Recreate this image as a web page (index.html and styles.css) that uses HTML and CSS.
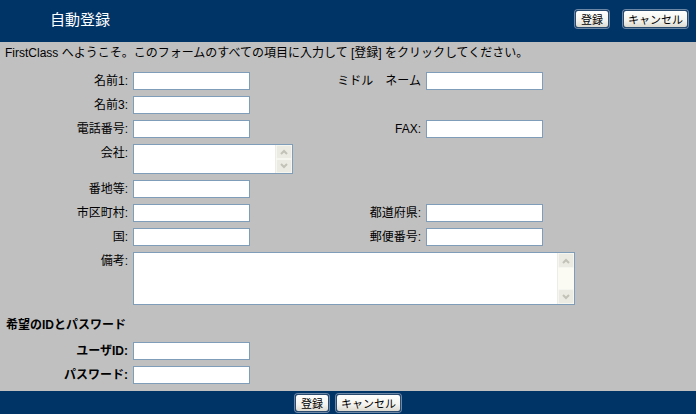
FILE: index.html
```html
<!DOCTYPE html>
<html lang="ja">
<head>
    <meta charset="UTF-8">
    <title>自動登録</title>
    <link rel="stylesheet" href="styles.css">
</head>
<body>
    <header class="topbar">
        <h1>自動登録</h1>
        <div class="actions">
            <button class="btn btn-ok">登録</button>
            <button class="btn btn-cancel">キャンセル</button>
        </div>
    </header>

    <p class="intro">FirstClass へようこそ。このフォームのすべての項目に入力して [登録] をクリックしてください。</p>

    <!-- Personal info -->
    <div class="form-grid">
        <label class="lbl">名前1:</label>
        <input class="field" type="text">
        <label class="lbl">ミドル　ネーム</label>
        <input class="field" type="text">

        <label class="lbl">名前3:</label>
        <input class="field" type="text">
        <span></span><span></span>

        <label class="lbl">電話番号:</label>
        <input class="field" type="text">
        <label class="lbl">FAX:</label>
        <input class="field" type="text">

        <label class="lbl">会社:</label>
        <div class="memo memo-small">
            <textarea></textarea>
            <div class="scroll">
                <span class="sb-btn"><svg width="10" height="8" viewBox="0 0 10 8"><polyline points="2,6 5,3 8,6" /></svg></span>
                <span class="sb-btn"><svg width="10" height="8" viewBox="0 0 10 8"><polyline points="2,2 5,5 8,2" /></svg></span>
            </div>
        </div>
        <span></span><span></span>

        <label class="lbl">番地等:</label>
        <input class="field" type="text">
        <span></span><span></span>

        <label class="lbl">市区町村:</label>
        <input class="field" type="text">
        <label class="lbl">都道府県:</label>
        <input class="field" type="text">

        <label class="lbl">国:</label>
        <input class="field" type="text">
        <label class="lbl">郵便番号:</label>
        <input class="field" type="text">

        <label class="lbl">備考:</label>
        <div class="memo memo-wide">
            <textarea></textarea>
            <div class="scroll">
                <span class="sb-btn"><svg width="10" height="8" viewBox="0 0 10 8"><polyline points="2,6 5,3 8,6" /></svg></span>
                <span class="sb-btn"><svg width="10" height="8" viewBox="0 0 10 8"><polyline points="2,2 5,5 8,2" /></svg></span>
            </div>
        </div>
    </div>

    <h2 class="section">希望のIDとパスワード</h2>

    <div class="form-grid login">
        <label class="lbl bold">ユーザID:</label>
        <input class="field" type="text">
        <span></span><span></span>

        <label class="lbl bold">パスワード:</label>
        <input class="field" type="password">
        <span></span><span></span>
    </div>

    <footer class="bottombar">
        <button class="btn btn-ok">登録</button>
        <button class="btn btn-cancel">キャンセル</button>
    </footer>
</body>
</html>
```

FILE: styles.css
```css
body {
    margin: 0;
    height: 100vh;
    display: flex;
    flex-direction: column;
    background: #c0c0c0;
    font-family: "Liberation Sans", "Noto Sans CJK JP", sans-serif;
    font-size: 12px;
    color: #000;
    overflow: hidden;
}
.topbar {
    height: 42px;
    flex: none;
    display: flex;
    align-items: center;
    justify-content: space-between;
    background: #003366;
    padding: 0 8px 0 50px;
    box-sizing: border-box;
}
.topbar h1 {
    margin: 0 0 6px 0;
    font-size: 15px;
    font-weight: normal;
    color: #fff;
}
.topbar .actions {
    display: flex;
    gap: 14px;
    margin-bottom: 4px;
}
.btn {
    height: 18px;
    padding: 0;
    font-family: "Noto Sans CJK JP", sans-serif;
    font-size: 11px;
    line-height: 14px;
    color: #000;
    background: linear-gradient(#ffffff, #f4f3ee 60%, #dcdad0);
    border: 1px solid #2a4a6e;
    border-radius: 3px;
    box-shadow: 0 0 0 1px #6d87a6;
}
.btn-ok {
    width: 34px;
}
.btn-cancel {
    width: 65px;
}
.intro {
    margin: 1px 0 0 5px;
    line-height: 20px;
}
.form-grid {
    display: grid;
    grid-template-columns: 128px 160px 123px 150px;
    column-gap: 5px;
    row-gap: 6px;
    margin-top: 9px;
    align-items: start;
}
.form-grid.login {
    margin-top: 0;
}
.lbl {
    text-align: right;
    line-height: 18px;
    white-space: nowrap;
}
.bold {
    font-weight: bold;
}
.field {
    width: 117px;
    height: 18px;
    box-sizing: border-box;
    margin: 0;
    padding: 0 2px;
    border: 1px solid #7f9db9;
    background: #fff;
}
.memo {
    display: flex;
    box-sizing: border-box;
    border: 1px solid #7f9db9;
    background: #fff;
}
.memo textarea {
    flex: 1;
    border: none;
    resize: none;
    outline: none;
    margin: 0;
    padding: 0;
}
.memo-small {
    width: 160px;
    height: 30px;
}
.memo-wide {
    grid-column: 2 / 5;
    width: 442px;
    height: 53px;
}
.scroll {
    width: 16px;
    display: flex;
    flex-direction: column;
    justify-content: space-between;
    background: #fbfbf3;
    border-left: 1px solid #eeede5;
}
.sb-btn {
    height: 13px;
    display: flex;
    align-items: center;
    justify-content: center;
    background: #ebebe3;
    border: 1px solid #f6f6f1;
    border-radius: 2px;
}
.sb-btn polyline {
    fill: none;
    stroke: #c2c2b8;
    stroke-width: 2;
}
.section {
    margin: 11px 0 8px 6px;
    font-size: 12px;
    line-height: 18px;
}
.bottombar {
    margin-top: auto;
    height: 23px;
    display: flex;
    align-items: center;
    justify-content: center;
    gap: 7px;
    background: #003366;
}
```
